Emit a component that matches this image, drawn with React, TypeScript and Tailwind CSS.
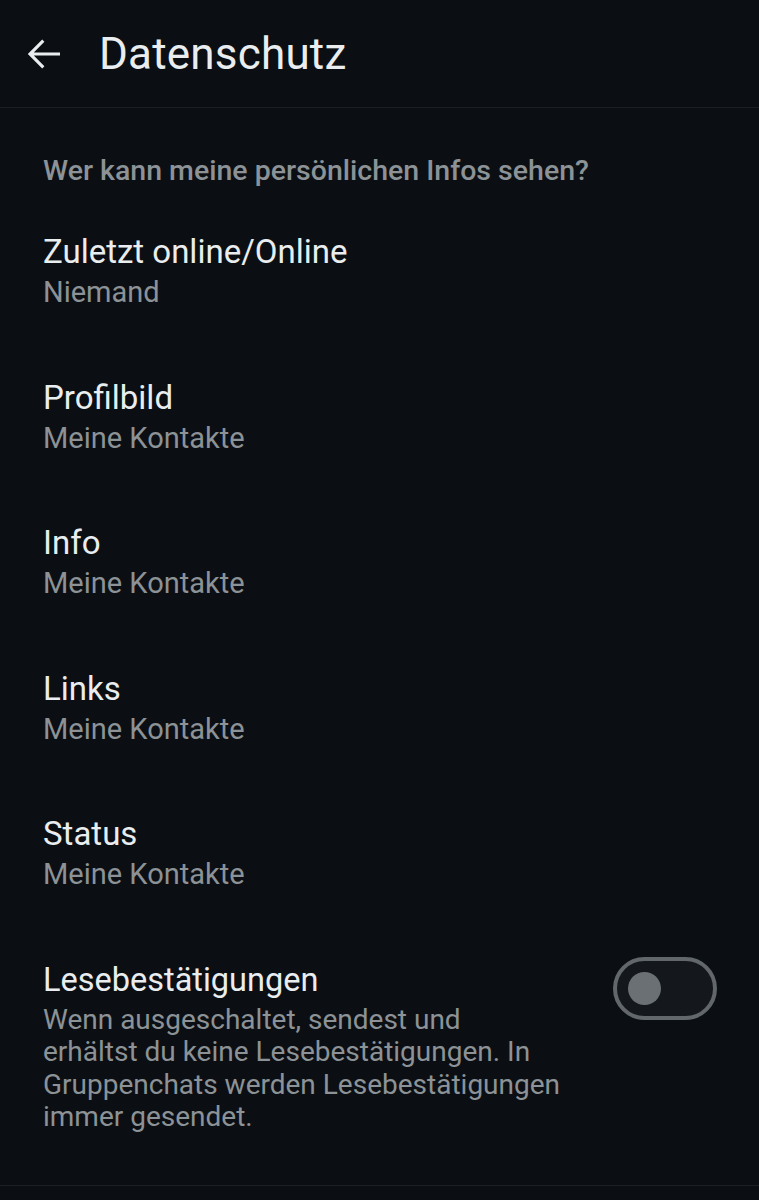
import React from "react";

const items = [
  { title: "Zuletzt online/Online", value: "Niemand" },
  { title: "Profilbild", value: "Meine Kontakte" },
  { title: "Info", value: "Meine Kontakte" },
  { title: "Links", value: "Meine Kontakte" },
  { title: "Status", value: "Meine Kontakte" },
];

function BackArrow() {
  return (
    <svg width="48" height="48" viewBox="0 0 24 24" className="shrink-0">
      <path
        d="M20 11.2H6.9l5.3-5.3L11.1 4.8 3.9 12l7.2 7.2 1.1-1.1-5.3-5.3H20v-1.6z"
        fill="#e9edef"
      />
    </svg>
  );
}

function Toggle({ on }: { on: boolean }) {
  return (
    <div className="w-[104px] h-[63px] rounded-full border-[4px] border-[#62676b] bg-[#14181c] flex items-center px-[11px]">
      <div className={"w-[33px] h-[33px] rounded-full bg-[#6b7075] " + (on ? "ml-auto" : "")} />
    </div>
  );
}

export default function App() {
  return (
    <div
      className="min-h-[1200px] bg-[#0b0f13] text-[#e9edef]"
      style={{ fontFamily: "Roboto, 'Noto Sans', sans-serif" }}
    >
      {/* Top bar */}
      <div className="h-[108px] flex items-center pl-[20px] border-b border-[#1b2024]">
        <BackArrow />
        <h1 className="ml-[31px] text-[44px] leading-none font-normal tracking-[0.2px]">Datenschutz</h1>
      </div>

      {/* Section */}
      <div className="pt-[45px] pl-[43px]">
        <p className="text-[28.5px] leading-[36px] font-medium text-[#8c9296]">
          Wer kann meine persönlichen Infos sehen?
        </p>
      </div>

      <div className="pt-[6px]">
        {items.map((it) => (
          <div key={it.title} className="pl-[43px] pr-[40px] pt-[33px] pb-[32.5px]">
            <div className="text-[33px] leading-[48px]">{it.title}</div>
            <div className="text-[29px] leading-[32px] text-[#8c9296]">{it.value}</div>
          </div>
        ))}

        <div className="pl-[43px] pr-[42px] pt-[33px] pb-[51px] flex items-start border-b border-[#1b2024]">
          <div className="flex-1">
            <div className="text-[32.5px] leading-[48px]">Lesebestätigungen</div>
            <div className="text-[28px] leading-[32.5px] text-[#8c9296]">
              Wenn ausgeschaltet, sendest und
              <br />
              erhältst du keine Lesebestätigungen. In
              <br />
              Gruppenchats werden Lesebestätigungen
              <br />
              immer gesendet.
            </div>
          </div>
          <div className="pt-[1px]">
            <Toggle on={false} />
          </div>
        </div>
      </div>
    </div>
  );
}
